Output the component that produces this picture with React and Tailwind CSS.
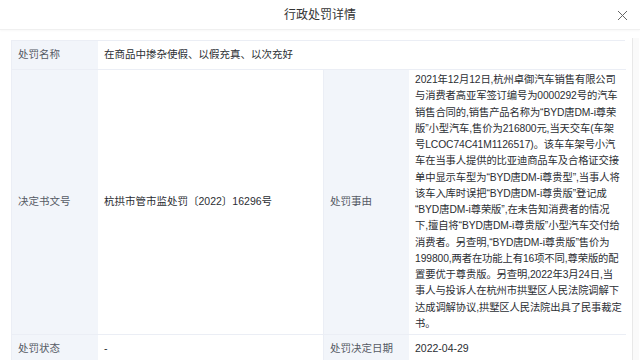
import React from "react";

const FONT = { fontFamily: '"Liberation Sans","Noto Sans CJK SC",sans-serif' };

const reasonLines = [
  "2021年12月12日,杭州卓御汽车销售有限公司",
  "与消费者高亚军签订编号为0000292号的汽车",
  "销售合同的,销售产品名称为“BYD唐DM-i尊荣",
  "版”小型汽车,售价为216800元,当天交车(车架",
  "号LCOC74C41M1126517)。该车车架号小汽",
  "车在当事人提供的比亚迪商品车及合格证交接",
  "单中显示车型为“BYD唐DM-i尊贵型”,当事人将",
  "该车入库时误把“BYD唐DM-i尊贵版”登记成",
  "“BYD唐DM-i尊荣版”,在未告知消费者的情况",
  "下,擅自将“BYD唐DM-i尊贵版”小型汽车交付给",
  "消费者。另查明,“BYD唐DM-i尊贵版”售价为",
  "199800,两者在功能上有16项不同,尊荣版的配",
  "置要优于尊贵版。另查明,2022年3月24日,当",
  "事人与投诉人在杭州市拱墅区人民法院调解下",
  "达成调解协议,拱墅区人民法院出具了民事裁定",
  "书。",
];

const Label = ({ children, className = "" }) => (
  <div className={"bg-[#f2f5fa] text-[#555a64] px-[6px] flex items-center border-b border-[#ebeef5] " + className}>
    {children}
  </div>
);

const Value = ({ children, className = "" }) => (
  <div className={"bg-white text-[#2b2e33] px-[6px] flex items-center border-b border-[#ebeef5] " + className}>
    {children}
  </div>
);

export default function App() {
  return (
    <div className="w-[640px] h-[360px] overflow-hidden bg-white flex flex-col" style={FONT}>
      <div className="h-[30px] shrink-0 flex items-center justify-center relative border-b border-[#f0f0f0] shadow-[0_1px_2px_rgba(0,0,0,0.03)]">
        <span className="text-[12px] text-[#333]">行政处罚详情</span>
        <svg className="absolute right-[12px] top-[10px]" width="11" height="11" viewBox="0 0 11 11">
          <path d="M1 1L10 10M10 1L1 10" stroke="#666" strokeWidth="1" />
        </svg>
      </div>
      <div className="flex flex-1 min-h-0">
        <div className="pl-[11px] pt-[10px] flex-1 min-w-0">
          <div className="w-[614px] grid grid-cols-[86px_226px_85px_217px] text-[10.5px] border-t border-l border-r border-[#ebeef5]">
            <Label className="h-[29px]">处罚名称</Label>
            <Value className="col-span-3 h-[29px]">在商品中掺杂使假、以假充真、以次充好</Value>

            <Label>决定书文号</Label>
            <Value className="border-r border-r-[#ebeef5]">杭拱市管市监处罚〔2022〕16296号</Value>
            <Label>处罚事由</Label>
            <Value className="py-[2px] leading-[16.25px] text-[10.3px] tracking-[-0.1px]">
              <div>
                {reasonLines.map((line, i) => (
                  <div key={i} className="whitespace-nowrap">{line}</div>
                ))}
              </div>
            </Value>

            <Label className="h-[29px]">处罚状态</Label>
            <Value className="h-[29px] border-r border-r-[#ebeef5]">-</Value>
            <Label className="h-[29px]">处罚决定日期</Label>
            <Value className="h-[29px]">2022-04-29</Value>
          </div>
        </div>
        <div className="w-[7px] mt-[8px] mr-[1px] bg-[#fafafa] border-l border-[#e8e8e8]"></div>
      </div>
    </div>
  );
}
